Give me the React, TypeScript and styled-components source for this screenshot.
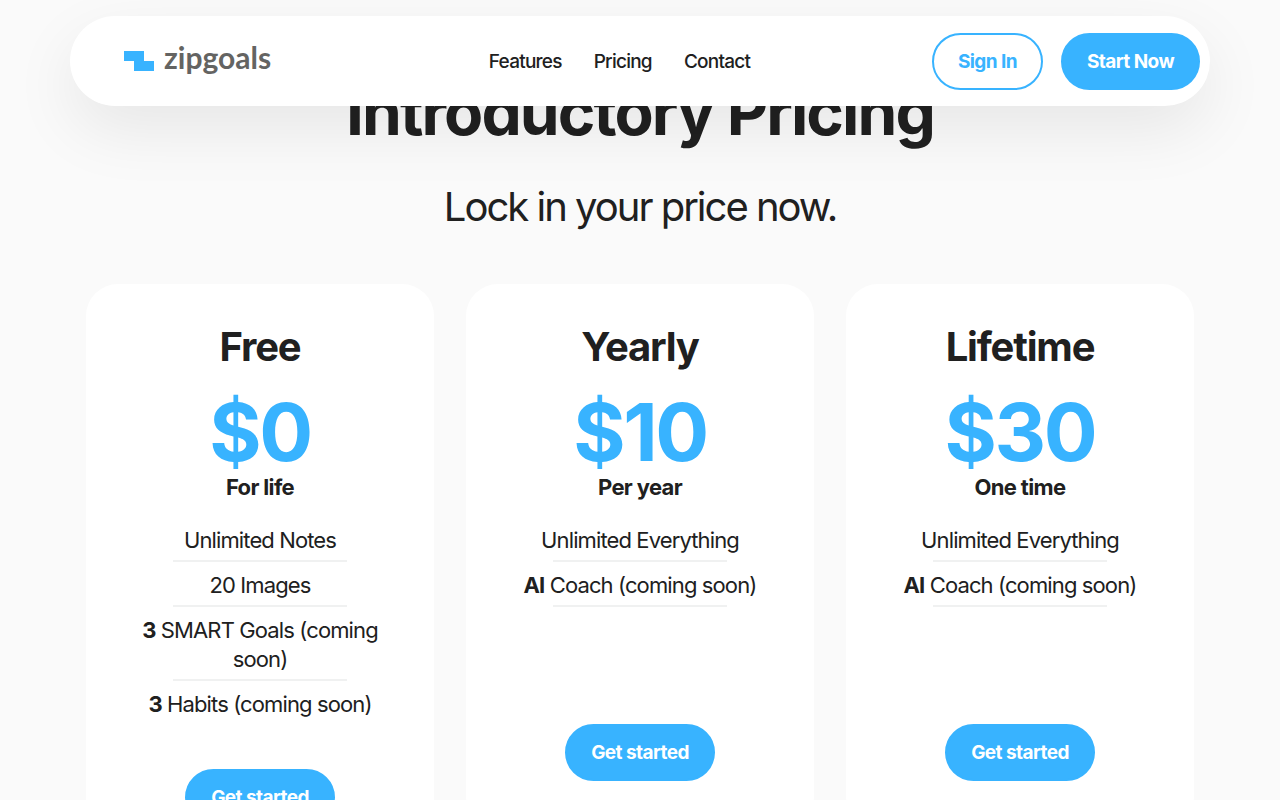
import React from "react";
import styled, { createGlobalStyle, css } from "styled-components";

const blue = "#38b3ff";
const ink = "#202020";

const tracking = {
  bold: "-0.03em",
  body: "-0.04em",
  lead: "-0.05em",
};

const GlobalStyle = createGlobalStyle`
  *, *::before, *::after { box-sizing: border-box; }
  body {
    margin: 0;
    background: #fafafa;
    color: ${ink};
    font-family: Inter, "Liberation Sans", sans-serif;
    font-size: 22px;
    line-height: 29px;
  }
  h1, h2, p, ul { margin: 0; padding: 0; }
`;

const Header = styled.header`
  position: sticky;
  top: 16px;
  z-index: 10;
  display: flex;
  align-items: center;
  justify-content: space-between;
  max-width: 1140px;
  height: 90px;
  margin: 16px auto 0;
  padding: 0 10px 0 54px;
  background: #ffffff;
  border-radius: 45px;
  box-shadow: 0 24px 64px rgba(0, 0, 0, 0.08);
`;

const Logo = styled.a`
  display: flex;
  align-items: center;
  gap: 9px;
  padding-right: 36px;
  color: #646462;
  text-decoration: none;
`;

const Wordmark = styled.span`
  padding-bottom: 8px;
  font-family: Lato, "Liberation Sans", sans-serif;
  font-size: 30px;
  font-weight: 700;
  line-height: 32px;
`;

const Nav = styled.nav`
  display: flex;
  gap: 32px;
`;

const NavLink = styled.a`
  color: ${ink};
  font-size: 19px;
  font-weight: 500;
  letter-spacing: ${tracking.body};
  text-decoration: none;
`;

const Actions = styled.div`
  display: flex;
  gap: 18px;
`;

const Button = styled.button<{ $outline?: boolean }>`
  height: 57px;
  padding: 0 24px;
  border: 2px solid ${blue};
  border-radius: 29px;
  background: ${blue};
  color: #ffffff;
  font: inherit;
  font-size: 19px;
  font-weight: 700;
  letter-spacing: ${tracking.bold};
  white-space: nowrap;
  cursor: pointer;
  ${(p) =>
    p.$outline &&
    css`
      background: #ffffff;
      color: ${blue};
    `}
`;

const Main = styled.main`
  display: flex;
  flex-direction: column;
  align-items: center;
  padding: 0 32px 64px;
  text-align: center;
`;

const Title = styled.h1`
  margin-top: -34px;
  font-size: 64px;
  font-weight: 700;
  line-height: 80px;
  letter-spacing: ${tracking.bold};
`;

const Subtitle = styled.p`
  margin-top: 29px;
  font-size: 40px;
  line-height: 52px;
  letter-spacing: ${tracking.lead};
`;

const Plans = styled.section`
  display: grid;
  grid-template-columns: repeat(3, 1fr);
  align-items: start;
  gap: 32px;
  width: 100%;
  max-width: 1108px;
  margin-top: 51px;
`;

const Card = styled.article`
  display: flex;
  flex-direction: column;
  align-items: center;
  padding: 37px 48px 48px;
  background: #ffffff;
  border-radius: 32px;
`;

const PlanName = styled.h2`
  font-size: 40px;
  font-weight: 700;
  line-height: 52px;
  letter-spacing: ${tracking.bold};
`;

const Price = styled.p`
  margin-top: 18px;
  color: ${blue};
  font-size: 80px;
  font-weight: 700;
  line-height: 82px;
  letter-spacing: ${tracking.bold};
`;

const Period = styled.p`
  font-weight: 700;
  letter-spacing: ${tracking.bold};
`;

const Features = styled.ul`
  width: 100%;
  min-height: 164px;
  margin-top: 16px;
  letter-spacing: ${tracking.body};
  list-style: none;
`;

const Feature = styled.li`
  padding: 8px 0 1px;

  &::after {
    content: "";
    display: block;
    width: 174px;
    height: 2px;
    margin: 5px auto 0;
    background: #f0f1f1;
  }
  &:nth-child(4)::after {
    background: transparent;
  }
`;

const CardButton = styled(Button)`
  margin-top: 42px;
`;

interface Item {
  lead?: string;
  text: string;
}

const plans: { name: string; price: string; period: string; items: Item[] }[] = [
  {
    name: "Free",
    price: "$0",
    period: "For life",
    items: [
      { text: "Unlimited Notes" },
      { text: "20 Images" },
      { lead: "3", text: "SMART Goals (coming soon)" },
      { lead: "3", text: "Habits (coming soon)" },
    ],
  },
  {
    name: "Yearly",
    price: "$10",
    period: "Per year",
    items: [{ text: "Unlimited Everything" }, { lead: "AI", text: "Coach (coming soon)" }],
  },
  {
    name: "Lifetime",
    price: "$30",
    period: "One time",
    items: [{ text: "Unlimited Everything" }, { lead: "AI", text: "Coach (coming soon)" }],
  },
];

export default function App() {
  return (
    <>
      <GlobalStyle />
      <Header>
        <Logo href="#home">
          <svg width="31" height="21" viewBox="0 0 31 21" aria-hidden="true">
            <path d="M0 0H20V10H30V20H10V10H0Z" fill={blue} />
          </svg>
          <Wordmark>zipgoals</Wordmark>
        </Logo>
        <Nav>
          <NavLink href="#features">Features</NavLink>
          <NavLink href="#pricing">Pricing</NavLink>
          <NavLink href="#contact">Contact</NavLink>
        </Nav>
        <Actions>
          <Button type="button" $outline>
            Sign In
          </Button>
          <Button type="button">Start Now</Button>
        </Actions>
      </Header>
      <Main>
        <Title>Introductory Pricing</Title>
        <Subtitle>Lock in your price now.</Subtitle>
        <Plans id="pricing">
          {plans.map((plan) => (
            <Card key={plan.name}>
              <PlanName>{plan.name}</PlanName>
              <Price>{plan.price}</Price>
              <Period>{plan.period}</Period>
              <Features>
                {plan.items.map((item) => (
                  <Feature key={item.text}>
                    {item.lead && <strong>{item.lead}</strong>} {item.text}
                  </Feature>
                ))}
              </Features>
              <CardButton type="button">Get started</CardButton>
            </Card>
          ))}
        </Plans>
      </Main>
    </>
  );
}
